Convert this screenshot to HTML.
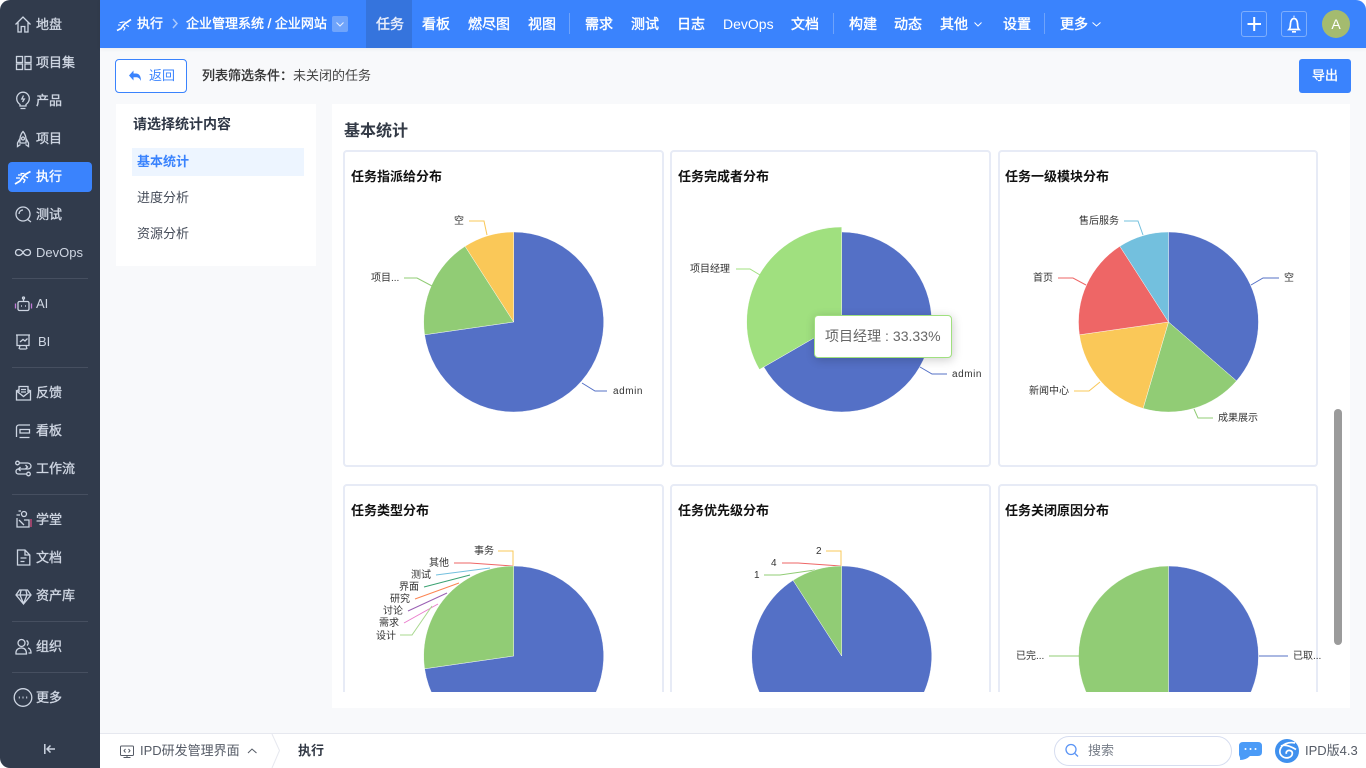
<!DOCTYPE html>
<html lang="zh-CN">
<head>
<meta charset="utf-8">
<title>任务统计</title>
<style>
*{box-sizing:border-box;margin:0;padding:0}
html,body{width:1366px;height:768px;overflow:hidden;background:#fff;font-family:"Liberation Sans","Noto Sans CJK SC",sans-serif}
#app{position:absolute;left:0;top:0;width:1366px;height:768px;overflow:hidden;border-radius:10px;background:#f8f9fb}
.a{position:absolute;white-space:nowrap}
.t{position:absolute;white-space:nowrap;line-height:20px;height:20px}
.fm{font-weight:400;-webkit-text-stroke:.35px currentColor}
#side{position:absolute;left:0;top:0;width:100px;height:768px;background:#313b4c}
#side .t{left:36px;color:#cfd6e2;font-size:13px;font-weight:400;-webkit-text-stroke:.35px currentColor}
#side .t.n{-webkit-text-stroke:0}
.sep{position:absolute;left:12px;width:76px;height:1px;background:#464f60}
#top{position:absolute;left:100px;top:0;width:1266px;height:48px;background:#3a83fd;box-shadow:0 1px 4px rgba(0,0,0,.06)}
#top .t{top:13.500px;color:#fff;font-size:14px;font-weight:400;-webkit-text-stroke:.4px currentColor}
#top .t.n{-webkit-text-stroke:0}
.vs{position:absolute;top:13px;width:1px;height:21px;background:#6ea3fb}
svg{position:absolute;overflow:visible}
.lab{font-size:10px;fill:#333;font-family:"Liberation Sans","Noto Sans CJK SC",sans-serif}
.ct{font-size:13px;font-weight:700;fill:#111;font-family:"Liberation Sans","Noto Sans CJK SC",sans-serif}
.ll{fill:none;stroke-width:1}
.pie path{stroke:#fff;stroke-width:.4}
</style>
</head>
<body>
<div id="app">

<!-- main panels -->
<div class="a" style="left:116px;top:104px;width:200px;height:162px;background:#fff"></div>
<div class="a" style="left:332px;top:104px;width:1018px;height:604px;background:#fff"></div>

<!-- toolbar -->
<div class="a" style="left:115px;top:59px;width:72px;height:34px;border:1px solid #3a83fd;border-radius:4px;background:#fff"></div>
<svg style="left:0;top:0" width="1366" height="768" fill="none"><path d="M133.500 70.500V73.500H136C139 73.500 141 76 141 81C139.500 78 138 77.300 136 77.300H133.500V80.500L129 75.500Z" fill="#3a83fd"/></svg>
<div class="t" style="left:149px;top:66px;font-size:13px;color:#3a83fd">返回</div>
<div class="t fm" style="left:202px;top:66px;font-size:13px;color:#333">列表筛选条件：</div>
<div class="t" style="left:293px;top:66px;font-size:13px;color:#444">未关闭的任务</div>
<div class="a" style="left:1299px;top:59px;width:52px;height:34px;background:#3a83fd;border-radius:3px"></div>
<div class="t fm" style="left:1312px;top:66px;font-size:13px;color:#fff">导出</div>

<!-- left nav -->
<div class="t" style="left:133px;top:114px;font-size:14px;font-weight:700;color:#2f3746">请选择统计内容</div>
<div class="a" style="left:132px;top:148px;width:172px;height:28px;background:#edf5ff"></div>
<div class="t" style="left:137px;top:152px;font-size:13px;font-weight:700;color:#3a83fd">基本统计</div>
<div class="t" style="left:137px;top:188px;font-size:13px;color:#444b58">进度分析</div>
<div class="t" style="left:137px;top:224px;font-size:13px;color:#444b58">资源分析</div>

<!-- heading -->
<div class="t" style="left:344px;top:122px;font-size:16px;font-weight:700;color:#333a46">基本统计</div>

<!-- cards & charts -->
<div class="a" style="left:0;top:0;width:1366px;height:692px;overflow:hidden">
  <div class="a" style="left:343px;top:150px;width:321px;height:317px;border:2px solid #e7ebf6;border-radius:4px;background:#fff"></div>
  <div class="a" style="left:670px;top:150px;width:321px;height:317px;border:2px solid #e7ebf6;border-radius:4px;background:#fff"></div>
  <div class="a" style="left:998px;top:150px;width:320px;height:317px;border:2px solid #e7ebf6;border-radius:4px;background:#fff"></div>
  <div class="a" style="left:343px;top:484px;width:321px;height:317px;border:2px solid #e7ebf6;border-radius:4px;background:#fff"></div>
  <div class="a" style="left:670px;top:484px;width:321px;height:317px;border:2px solid #e7ebf6;border-radius:4px;background:#fff"></div>
  <div class="a" style="left:998px;top:484px;width:320px;height:317px;border:2px solid #e7ebf6;border-radius:4px;background:#fff"></div>

  <svg style="left:0;top:0" width="1366" height="768">
    <text class="ct" x="351" y="181">任务指派给分布</text>
    <text class="ct" x="678" y="181">任务完成者分布</text>
    <text class="ct" x="1005" y="181">任务一级模块分布</text>
    <text class="ct" x="351" y="515">任务类型分布</text>
    <text class="ct" x="678" y="515">任务优先级分布</text>
    <text class="ct" x="1005" y="515">任务关闭原因分布</text>

    <!-- chart 1 -->
    <g class="pie" transform="translate(513.700 322)">
      <path d="M0 0V-90A90 90 0 1 1 -89.100 12.800Z" fill="#5470c6"/>
      <path d="M0 0L-89.100 12.800A90 90 0 0 1 -48.650 -75.700Z" fill="#91cc75"/>
      <path d="M0 0L-48.650 -75.700A90 90 0 0 1 0 -90Z" fill="#fac858"/>
    </g>
    <path class="ll" stroke="#5470c6" d="M582 383L595 391H607"/>
    <path class="ll" stroke="#91cc75" d="M404 278H417L432 286"/>
    <path class="ll" stroke="#fac858" d="M469 221H484L487 235"/>
    <text class="lab" x="613" y="394" style="letter-spacing:.55px">admin</text>
    <text class="lab" x="371" y="281">项目...</text>
    <text class="lab" x="454" y="224">空</text>

    <!-- chart 2 -->
    <g class="pie" transform="translate(841.700 322)">
      <path d="M0 0V-90A90 90 0 1 1 -77.900 45Z" fill="#5470c6"/>
      <path d="M0 0L-82.300 47.500A95 95 0 0 1 0 -95Z" fill="#a0e07f"/>
    </g>
    <path class="ll" stroke="#a0e07f" d="M736 269H750L760 275"/>
    <path class="ll" stroke="#5470c6" d="M920 367L932 374H947"/>
    <text class="lab" x="690" y="272">项目经理</text>
    <text class="lab" x="952" y="377" style="letter-spacing:.55px">admin</text>

    <!-- chart 3 -->
    <g class="pie" transform="translate(1168.500 322)">
      <path d="M0 0V-90A90 90 0 0 1 68 58.900Z" fill="#5470c6"/>
      <path d="M0 0L68 58.900A90 90 0 0 1 -25.400 86.400Z" fill="#91cc75"/>
      <path d="M0 0L-25.400 86.400A90 90 0 0 1 -89.100 12.800Z" fill="#fac858"/>
      <path d="M0 0L-89.100 12.800A90 90 0 0 1 -48.650 -75.700Z" fill="#ee6666"/>
      <path d="M0 0L-48.650 -75.700A90 90 0 0 1 0 -90Z" fill="#73c0de"/>
    </g>
    <path class="ll" stroke="#73c0de" d="M1124 221H1138L1143 235"/>
    <path class="ll" stroke="#5470c6" d="M1251 285L1263 278H1279"/>
    <path class="ll" stroke="#91cc75" d="M1194 409L1198 418H1213"/>
    <path class="ll" stroke="#fac858" d="M1074 391H1089L1100 382"/>
    <path class="ll" stroke="#ee6666" d="M1058 278H1073L1086 285"/>
    <text class="lab" x="1079" y="224">售后服务</text>
    <text class="lab" x="1284" y="281">空</text>
    <text class="lab" x="1218" y="421">成果展示</text>
    <text class="lab" x="1029" y="394">新闻中心</text>
    <text class="lab" x="1033" y="281">首页</text>

    <!-- chart 4 -->
    <path class="ll" stroke="#fac858" d="M498 551H513V566"/>
    <path class="ll" stroke="#ee6666" d="M454 563H470L513 566"/>
    <path class="ll" stroke="#73c0de" d="M436 575L490 568"/>
    <path class="ll" stroke="#3ba272" d="M424 587L470 575"/>
    <path class="ll" stroke="#fc8452" d="M415 599L459 583"/>
    <path class="ll" stroke="#9a60b4" d="M408 611L447 593"/>
    <path class="ll" stroke="#ea7ccc" d="M404 623L438 604"/>
    <path class="ll" stroke="#a9d88f" d="M400 635H412L432 606"/>
    <g class="pie" transform="translate(513.700 656)">
      <path d="M0 0V-90A90 90 0 1 1 -89.100 12.800Z" fill="#5470c6"/>
      <path d="M0 0L-89.100 12.800A90 90 0 0 1 0 -90Z" fill="#91cc75"/>
    </g>
    <text class="lab" x="474" y="554">事务</text>
    <text class="lab" x="429" y="566">其他</text>
    <text class="lab" x="411" y="578">测试</text>
    <text class="lab" x="399" y="590">界面</text>
    <text class="lab" x="390" y="602">研究</text>
    <text class="lab" x="383" y="614">讨论</text>
    <text class="lab" x="379" y="626">需求</text>
    <text class="lab" x="376" y="639">设计</text>

    <!-- chart 5 -->
    <path class="ll" stroke="#fac858" d="M826 551H841V566"/>
    <path class="ll" stroke="#ee6666" d="M782 563H798L841 566"/>
    <path class="ll" stroke="#91cc75" d="M764 575H780L815 570"/>
    <g class="pie" transform="translate(841.700 656)">
      <path d="M0 0V-90A90 90 0 1 1 -48.650 -75.700Z" fill="#5470c6"/>
      <path d="M0 0L-48.650 -75.700A90 90 0 0 1 0 -90Z" fill="#91cc75"/>
    </g>
    <text class="lab" x="816" y="554">2</text>
    <text class="lab" x="771" y="566">4</text>
    <text class="lab" x="754" y="578">1</text>

    <!-- chart 6 -->
    <g class="pie" transform="translate(1168.500 656)">
      <path d="M0 -90A90 90 0 0 1 0 90Z" fill="#5470c6"/>
      <path d="M0 -90A90 90 0 0 0 0 90Z" fill="#91cc75"/>
    </g>
    <path class="ll" stroke="#5470c6" d="M1259 656H1288"/>
    <path class="ll" stroke="#91cc75" d="M1049 656H1079"/>
    <text class="lab" x="1293" y="659">已取...</text>
    <text class="lab" x="1016" y="659">已完...</text>
  </svg>
</div>

<!-- tooltip -->
<div class="a" style="left:814px;top:315px;width:138px;height:43px;background:#fff;border:1px solid #a0e07f;border-radius:4px;box-shadow:1px 2px 10px rgba(0,0,0,.2);color:#666;font-size:14px;line-height:41px;padding-left:10px;letter-spacing:.03px">项目经理 : 33.33%</div>

<!-- scrollbar -->
<div class="a" style="left:1334px;top:409px;width:8px;height:236px;background:#9b9b9b;border-radius:4px"></div>

<!-- sidebar -->
<div id="side">
  <div class="a" style="left:8px;top:162px;width:84px;height:30px;background:#3a83fd;border-radius:4px"></div>
  <div class="t" style="top:15px">地盘</div>
  <div class="t" style="top:53px">项目集</div>
  <div class="t" style="top:91px">产品</div>
  <div class="t" style="top:129px">项目</div>
  <div class="t" style="top:167px;color:#fff">执行</div>
  <div class="t" style="top:205px">测试</div>
  <div class="t n" style="top:243px">DevOps</div>
  <div class="sep" style="top:278px"></div>
  <div class="t n" style="top:294px">AI</div>
  <div class="t n" style="top:332px;left:38px">BI</div>
  <div class="sep" style="top:367px"></div>
  <div class="t" style="top:383px">反馈</div>
  <div class="t" style="top:421px">看板</div>
  <div class="t" style="top:459px">工作流</div>
  <div class="sep" style="top:494px"></div>
  <div class="t" style="top:510px">学堂</div>
  <div class="t" style="top:548px">文档</div>
  <div class="t" style="top:586px">资产库</div>
  <div class="sep" style="top:621px"></div>
  <div class="t" style="top:637px">组织</div>
  <div class="sep" style="top:672px"></div>
  <div class="t" style="top:688px">更多</div>

  <svg style="left:0;top:0" width="100" height="768" fill="none" stroke="#cdd5e2" stroke-width="1.300">
    <!-- home -->
    <path d="M15.500 24.500L23 17L30.500 24.500M18 22.500V32H21.200V26.500H24.800V32H28V22.500"/>
    <!-- grid -->
    <rect x="16.500" y="56.500" width="6" height="6"/><rect x="25" y="56.500" width="6" height="6"/><rect x="16.500" y="64" width="6" height="5.500"/><rect x="25" y="64" width="6" height="5.500"/>
    <!-- bulb -->
    <path d="M20 104.500C18 103 16.700 101 16.700 98.500A6.300 6.300 0 0 1 29.300 98.500C29.300 101 28 103 26 104.500V106H20ZM20.500 108.500H25.500M23.500 95.500L21.800 99H24.300L22.500 102"/>
    <!-- rocket -->
    <path d="M23 131.500C20 134.500 19.500 138 20 143H26C26.500 138 26 134.500 23 131.500ZM20 138.500L17.500 143V146.500L20.500 144.500M26 138.500L28.500 143V146.500L25.500 144.500"/><circle cx="23" cy="138.500" r="1.500"/>
    <!-- run -->
    <g stroke="#fff"><path d="M15 184L20 181L23 176.500L26 174L30.500 171.500" stroke-width="1.800"/><path d="M22 178L25 180L23.500 183M24.500 173.500H20.500M25 176.500L28 178M16 178H20M18 175H22"/></g>
    <!-- test -->
    <circle cx="23" cy="214" r="7"/><path d="M19 214C19 211.500 21 210 23 210M27 219L31 222"/>
    <!-- devops -->
    <path d="M23 252.500C21.500 250 20 249.500 18.500 249.500A3 3 0 0 0 18.500 255.500C20 255.500 21.500 255 23 252.500C24.500 250 26 249.500 27.500 249.500A3 3 0 0 1 27.500 255.500C26 255.500 24.500 255 23 252.500Z"/>
    <!-- robot -->
    <rect x="18" y="301.500" width="11" height="9" rx="1.500"/><path d="M23.500 298.500V301.500"/><circle cx="23.500" cy="298" r="1"/>
    <path d="M15.500 303.500V308.500" stroke="#c07ad6"/><path d="M31.500 303.500V308.500" stroke="#c07ad6"/>
    <path d="M21 306H21.800M25.200 306H26" stroke-width="1.800"/>
    <!-- BI -->
    <path d="M16 335H30M17 335V345.500H29V335M20 345.500L19 349M26 345.500L27 349M19.500 349H26.500M20 342L23 339.500L25 341L27.500 338.500"/>
    <!-- feedback -->
    <path d="M19 392V386.500H28V392M16.500 391L19 389.500M30.500 391L28 389.500M16.500 391V400H30.500V391L23.500 396.500Z"/><path d="M21 389.500H26M21 392H26"/>
    <!-- board -->
    <path d="M30 425H19C17.500 425 16.500 426 16.500 427.500V437M20 429.500H29.500V433H20ZM19.500 437.500H29.500"/>
    <!-- flow -->
    <circle cx="17.500" cy="463" r="1.800"/><circle cx="28.500" cy="474" r="1.800"/><path d="M19.500 463H27.500C30 463 31 465 31 466C31 468 29.500 469 27.500 469H18.500C16.500 469 16 470.500 16 471.500C16 473 17 474 18.500 474H26.500"/><path d="M20.500 467L18.500 469L20.500 471M25.500 465L27.500 467L25.500 469"/>
    <!-- study -->
    <circle cx="24" cy="514" r="2.500"/><path d="M18.500 511H21M16.500 515H20M17 518V527H29V520H24"/><path d="M31 519V527" stroke="#d44a7a"/><path d="M19 520L24 525" />
    <!-- doc -->
    <path d="M17.500 550H25L29.800 555V565H17.500ZM25 550V555H29.800M20.500 558H26.500M20.500 561.500H24.500"/>
    <!-- gem -->
    <path d="M19.500 590H27.500L31 595L23.500 604L16 595ZM16 595H31M21 590.500L20 595L23.500 603.500L27 595L26 590.500"/>
    <!-- people -->
    <circle cx="21.500" cy="643" r="3.500"/><path d="M16 654C15.500 650 18 648 21.500 648C25 648 26.500 650 26.500 654ZM26.500 640.500A3 3 0 0 1 27 645.500M28 648C30 648.500 31 650 31 653H28.500"/>
    <!-- more -->
    <circle cx="23" cy="697.500" r="8.800"/>
    <path d="M18.800 697.500H19.800M22.500 697.500H23.500M26.200 697.500H27.200" stroke-width="2"/>
    <!-- collapse -->
    <path d="M44.800 744V754M55 749H47.500M50.500 745.500L47 749L50.500 752.500" stroke-width="1.500"/>
  </svg>
</div>

<!-- top bar -->
<div id="top">
  <div class="a" style="left:266px;top:0;width:46px;height:48px;background:#3574dd"></div>
  <div class="t" style="left:37px;font-size:13px">执行</div>
  <div class="t" style="left:86px;font-size:13px">企业管理系统 / 企业网站</div>
  <div class="a" style="left:232px;top:16px;width:16px;height:16px;background:#6fa4fb;border-radius:2px"></div>
  <div class="t" style="left:276px;color:#e9eefb">任务</div>
  <div class="t" style="left:322px">看板</div>
  <div class="t" style="left:368px">燃尽图</div>
  <div class="t" style="left:428px">视图</div>
  <div class="vs" style="left:469px"></div>
  <div class="t" style="left:485px">需求</div>
  <div class="t" style="left:531px">测试</div>
  <div class="t" style="left:577px">日志</div>
  <div class="t n" style="left:623px">DevOps</div>
  <div class="t" style="left:691px">文档</div>
  <div class="vs" style="left:733px"></div>
  <div class="t" style="left:749px">构建</div>
  <div class="t" style="left:794px">动态</div>
  <div class="t" style="left:840px">其他</div>
  <div class="t" style="left:903px">设置</div>
  <div class="vs" style="left:944px"></div>
  <div class="t" style="left:960px">更多</div>
  <div class="a" style="left:1141px;top:11px;width:26px;height:26px;border:1px solid #7eaefc;border-radius:3px"></div>
  <div class="a" style="left:1181px;top:11px;width:26px;height:26px;border:1px solid #7eaefc;border-radius:3px"></div>
  <div class="a" style="left:1222px;top:10px;width:28px;height:28px;border-radius:50%;background:#a4bb6f;color:#fff;font-size:14px;line-height:28px;text-align:center">A</div>
  <svg style="left:-100px;top:0" width="1366" height="48" fill="none" stroke="#fff">
    <path d="M117 30.500L121 28.500L123.500 25L126 23L131 19.500" stroke-width="1.700"/>
    <path d="M122.500 26L125 28L123.500 30.500M125.500 22H121.500M126 25L129 26.500M118 25H120.500M119.500 22.500H122.500" stroke-width="1.100"/>
    <path d="M173 19L177 23.500L173 28" stroke="#a9c9fd" stroke-width="1.500"/>
    <path d="M336.500 22.500L340 26L343.500 22.500" stroke="#e5eefe"/>
    <path d="M974.500 22.500L978 26L981.500 22.500"/>
    <path d="M1092.500 22.500L1096.500 26L1100.500 22.500"/>
    <path d="M1247.500 24H1261M1254.200 17V31" stroke-width="2"/>
    <path d="M1289 29.500C1290.500 28 1290.200 26 1290.500 23.500C1290.800 20.500 1292 18.500 1294 18.500C1296 18.500 1297.200 20.500 1297.500 23.500C1297.800 26 1297.500 28 1299 29.500ZM1293.500 16.500H1294.500M1292 31.800H1296" stroke-width="1.700"/>
  </svg>
</div>

<!-- bottom bar -->
<div class="a" style="left:100px;top:733px;width:1266px;height:35px;background:#fff;border-top:1px solid #e6e8ef"></div>
<svg style="left:0;top:0" width="1366" height="768" fill="none">
  <rect x="120.500" y="746" width="13" height="9.500" rx="1" stroke="#555b66"/>
  <path d="M127 755.500V757.500M123.500 757.500H130.500M125.500 749L124 750.700L125.500 752.500M128.500 749L130 750.700L128.500 752.500" stroke="#555b66"/>
  <path d="M248 753L252 749L256.500 753" stroke="#555b66"/>
  <path d="M272 734L279.500 750.500L272 768" stroke="#e6e8ef"/>
  <circle cx="1071" cy="749.500" r="5" stroke="#5a94f5" stroke-width="1.300"/>
  <path d="M1075 753.500L1078 756.500" stroke="#5a94f5" stroke-width="1.300"/>
  <path d="M1243 742H1258Q1262 742 1262 746V752Q1262 756 1258 756H1250Q1246 760 1240 760Q1240.500 758 1239 755V746Q1239 742 1243 742Z" fill="#4b9bf7"/>
  <circle cx="1245.500" cy="749" r="1" fill="#fff"/><circle cx="1250.500" cy="749" r="1" fill="#fff"/><circle cx="1255.500" cy="749" r="1" fill="#fff"/>
  <circle cx="1287" cy="751" r="12" fill="#3f90ee"/>
  <path d="M1295 743C1289 741.500 1281.500 744 1280 750C1279 755.500 1284 759 1289 757.500C1293 756 1293.500 751.500 1290 750.500C1287.500 750 1285.500 752 1286.500 753.800M1281 746C1285 744 1291 746.500 1296 749.500" stroke="#fff" stroke-width="1.700"/>
</svg>
<div class="t" style="left:140px;top:741px;font-size:13px;color:#555b66">IPD研发管理界面</div>
<div class="t" style="left:298px;top:741px;font-size:13px;font-weight:700;color:#333a46">执行</div>
<div class="a" style="left:1054px;top:736px;width:178px;height:30px;border:1px solid #d6ddf0;border-radius:15px"></div>
<div class="t" style="left:1088px;top:741px;font-size:13px;color:#777d88">搜索</div>
<div class="t" style="left:1305px;top:741px;font-size:13px;color:#555b66">IPD版4.3</div>

</div>
</body>
</html>
